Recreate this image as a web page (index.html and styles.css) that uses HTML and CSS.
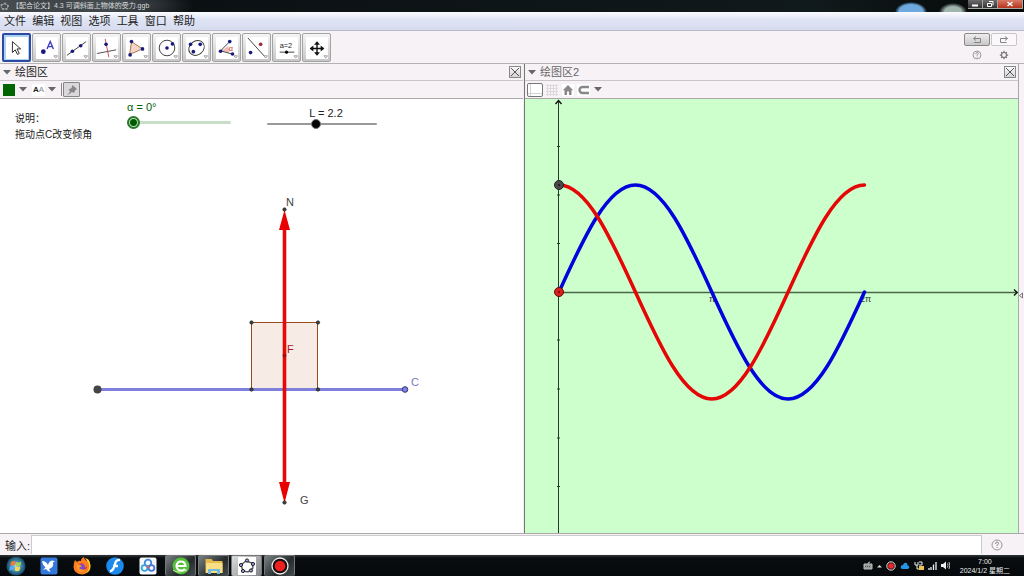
FILE: index.html
```html
<!DOCTYPE html>
<html lang="zh-CN">
<head>
<meta charset="utf-8">
<title>【配合论文】4.3 可调斜面上物体的受力.ggb</title>
<link rel="stylesheet" href="styles.css">
</head>
<body>
<div class="app">
  <header class="titlebar">
    <svg class="title-icon" width="9" height="9" viewBox="0 0 9 9"><ellipse cx="4.500" cy="4.500" rx="3.500" ry="2.600" fill="none" stroke="#8d8f93"/><g fill="#a5a7ac"><circle cx="1.500" cy="3" r="1"/><circle cx="5" cy="1.500" r="1"/><circle cx="8" cy="4" r="1"/><circle cx="3" cy="7" r="1"/><circle cx="6.500" cy="7" r="1"/></g></svg>
    <h1 class="title">【配合论文】4.3 可调斜面上物体的受力.ggb</h1>
    <div class="window-buttons">
      <button class="win-btn" aria-label="最小化"><svg width="8" height="8"><path d="M1 5.500h6" stroke="#fff" stroke-width="2"/></svg></button>
      <button class="win-btn" aria-label="还原"><svg width="8" height="8"><path d="M3 1.500h4v4M1.500 3.500h4v3h-4z" fill="none" stroke="#fff"/></svg></button>
      <button class="win-btn win-close" aria-label="关闭"><svg width="8" height="8"><path d="M1.500 2l5 4M6.500 2l-5 4" stroke="#fff" stroke-width="1.500"/></svg></button>
    </div>
  </header>

  <nav class="menubar">
    <button class="menu">文件</button><button class="menu">编辑</button><button class="menu">视图</button><button class="menu">选项</button><button class="menu">工具</button><button class="menu">窗口</button><button class="menu">帮助</button>
  </nav>

  <div class="toolbar">
    <div class="tools">
      <button class="tool tool-active" aria-label="移动"><svg viewBox="0 0 24 24"><path d="M7 5v12l3-3 2.500 5 2-1-2.500-5h4z" fill="#fff" stroke="#222"/></svg></button>
      <button class="tool" aria-label="点"><svg viewBox="0 0 24 24"><circle cx="8" cy="16" r="2.600" fill="#1a1a7e"/><path d="M12 13l3.500-8 3.500 8M13.300 10.500h4.400" fill="none" stroke="#3b3bc4" stroke-width="1.500"/><path class="corner" d="M19.500 20.500h4l-2 2.500z"/></svg></button>
      <button class="tool" aria-label="直线"><svg viewBox="0 0 24 24"><path d="M1 20L22 5" stroke="#333"/><circle cx="7" cy="15.500" r="2" fill="#1a1a7e"/><circle cx="16" cy="9.500" r="2" fill="#1a1a7e"/><path class="corner" d="M19.500 20.500h4l-2 2.500z"/></svg></button>
      <button class="tool" aria-label="垂线"><svg viewBox="0 0 24 24"><path d="M1 18L22 14" stroke="#444"/><path d="M10 2l4 20" stroke="#c44a4a"/><circle cx="11" cy="8" r="2" fill="#1a1a7e"/><path class="corner" d="M19.500 20.500h4l-2 2.500z"/></svg></button>
      <button class="tool" aria-label="多边形"><svg viewBox="0 0 24 24"><path d="M6 5l12 8-14 6z" fill="#f2d5c4" stroke="#a86d4b"/><g fill="#1a1a7e"><circle cx="6" cy="5" r="2"/><circle cx="18" cy="13" r="2"/><circle cx="4.500" cy="19.500" r="2"/></g><path class="corner" d="M19.500 20.500h4l-2 2.500z"/></svg></button>
      <button class="tool" aria-label="圆"><svg viewBox="0 0 24 24"><circle cx="12" cy="12" r="8.500" fill="none" stroke="#333"/><circle cx="12" cy="12" r="2" fill="#1a1a7e"/><circle cx="18" cy="7.500" r="2" fill="#1a1a7e"/><path class="corner" d="M19.500 20.500h4l-2 2.500z"/></svg></button>
      <button class="tool" aria-label="椭圆"><svg viewBox="0 0 24 24"><ellipse cx="11.500" cy="12" rx="9" ry="7.500" transform="rotate(-38 11.500 12)" fill="none" stroke="#333"/><g fill="#1a1a7e"><circle cx="5" cy="8" r="2"/><circle cx="15.500" cy="8" r="2"/><circle cx="8" cy="16" r="2"/></g><path class="corner" d="M19.500 20.500h4l-2 2.500z"/></svg></button>
      <button class="tool" aria-label="角度"><svg viewBox="0 0 24 24"><path d="M6 15l7-5a8 8 0 0 1 1.500 7z" fill="#f3b8b8"/><path d="M15 5L5 15l14 4" fill="none" stroke="#333"/><g fill="#1a1a7e"><circle cx="15" cy="5" r="2"/><circle cx="5" cy="15.500" r="2"/><circle cx="18" cy="18.500" r="2"/></g><text x="14" y="15" class="tool-alpha">α</text><path class="corner" d="M19.500 20.500h4l-2 2.500z"/></svg></button>
      <button class="tool" aria-label="对称"><svg viewBox="0 0 24 24"><path d="M2 1l19 21" stroke="#333"/><circle cx="16" cy="8" r="2" fill="#9c2b37"/><circle cx="5" cy="17" r="2" fill="#1a1a7e"/><path class="corner" d="M19.500 20.500h4l-2 2.500z"/></svg></button>
      <button class="tool" aria-label="滑动条"><svg viewBox="0 0 24 24"><text x="4" y="12" class="tool-text">a=2</text><path d="M4 16.500h16" stroke="#333"/><circle cx="11.500" cy="16.500" r="1.700"/><path class="corner" d="M19.500 20.500h4l-2 2.500z"/></svg></button>
      <button class="tool" aria-label="移动视图"><svg viewBox="0 0 24 24"><path d="M12 6v13M5 12.500h14" stroke="#111" stroke-width="1.500"/><path d="M12 4.500l-3.200 4h6.400zM12 20.500l-3.200-4h6.400zM4 12.500l4-3.200v6.400zM20 12.500l-4-3.200v6.400z" fill="#111"/><path class="corner" d="M19.500 20.500h4l-2 2.500z"/></svg></button>
    </div>
    <div class="actions">
      <button class="undo" aria-label="撤销"><svg width="10" height="8"><path d="M4 .5L1.500 2.500 4 4.500M1.500 2.500h7v4H2" fill="none" stroke="#858585"/></svg></button>
      <button class="redo" aria-label="重做"><svg width="10" height="8"><path d="M6 .5l2.500 2L6 4.500M8.500 2.500h-7v4h6" fill="none" stroke="#858585"/></svg></button>
      <button class="plain" aria-label="帮助"><svg width="10" height="10" viewBox="0 0 12 12"><circle cx="6" cy="6" r="4.700" fill="none" stroke="#888"/><path d="M4.500 5q0-2 1.600-2 1.500 0 1.400 1.400Q7.400 5.500 6 6.200V7M6 8v1" fill="none" stroke="#888"/></svg></button>
      <button class="plain" aria-label="设置"><svg width="10" height="10" viewBox="0 0 12 12"><circle cx="6" cy="6" r="3" fill="none" stroke="#777" stroke-width="1.400"/><path d="M6 1v2M6 9v2M1 6h2M9 6h2M2.500 2.500l1.300 1.300M8.200 8.200l1.300 1.300M9.500 2.500L8.200 3.800M3.800 8.200L2.500 9.500" stroke="#777" stroke-width="1.500"/></svg></button>
    </div>
  </div>

  <main class="views">
    <section class="view view-left">
      <div class="view-head">
        <svg class="arrow" width="8" height="5"><path d="M0 0h8L4 4.500z"/></svg>
        <h2 class="view-title">绘图区</h2>
        <button class="close" aria-label="关闭绘图区"><svg width="8" height="8"><path d="M0 0l8 8M8 0L0 8" stroke="#555"/></svg></button>
      </div>
      <div class="stylebar">
        <button class="plain swatch-btn" aria-label="颜色"><span class="swatch"></span><svg class="arrow" width="8" height="5"><path d="M0 0h8L4 4.500z"/></svg></button>
        <button class="plain text-btn" aria-label="文字大小"><span class="aa"><b>A</b><span class="a-light">A</span></span><svg class="arrow" width="8" height="5"><path d="M0 0h8L4 4.500z"/></svg></button>
        <span class="divider"></span>
        <button class="pin" aria-label="固定"><svg width="12" height="12"><path d="M6.500 1l4.500 4-1.500 1-1.500 3-2-1L1 11.500 4 7.500 2.500 5.500 5.500 4z" fill="#888"/></svg></button>
      </div>
      <div class="canvas">
        <svg class="drawing" role="img" aria-label="斜面上物体受力图">
          <rect x="251.500" y="223.500" width="66" height="67" fill="#f6ebe5" stroke="#994d1e"/>
          <path d="M98 290.500h307" stroke="#7f80dc" stroke-width="3"/>
          <path d="M284.500 127v262" stroke="#e60909" stroke-width="3.600"/>
          <path d="M284.500 111l5.500 20h-11zM284.500 404l5.500-21h-11z" fill="#e90000"/>
          <circle cx="97.500" cy="290.500" r="4" fill="#444"/>
          <circle cx="405" cy="290.500" r="2.800" fill="#7f80e8" stroke="#333670"/>
          <g fill="#444" stroke="#111" stroke-width=".6"><circle cx="284.500" cy="110.500" r="1.700"/><circle cx="251.500" cy="223.500" r="1.700"/><circle cx="318" cy="223.500" r="1.700"/><circle cx="251.500" cy="290.500" r="1.700"/><circle cx="318" cy="290.500" r="1.700"/><circle cx="284.500" cy="403.500" r="1.700"/></g>
          <circle cx="284.500" cy="256.500" r="1.500" fill="#b51212" stroke="#7c0000" stroke-width=".7"/>
          <text class="label" x="286" y="107">N</text>
          <text class="label label-force" x="287" y="254">F</text>
          <text class="label" x="300" y="405">G</text>
          <text class="label label-point" x="411" y="287">C</text>
        </svg>
        <p class="note">说明：<br>拖动点C改变倾角</p>
        <div class="slider slider-angle"><label class="angle-label" for="angle">α = 0°</label><input id="angle" type="range" min="0" max="90" value="0"></div>
        <div class="slider slider-length"><label for="length">L = 2.2</label><input id="length" type="range" min="0" max="5" step="0.1" value="2.2"></div>
      </div>
    </section>

    <section class="view view-right">
      <div class="view-head">
        <svg class="arrow" width="8" height="5"><path d="M0 0h8L4 4.500z"/></svg>
        <h2 class="view-title title-dim">绘图区2</h2>
        <button class="close" aria-label="关闭绘图区2"><svg width="8" height="8"><path d="M0 0l8 8M8 0L0 8" stroke="#555"/></svg></button>
      </div>
      <div class="stylebar">
        <button class="axes" aria-label="坐标轴"><svg width="14" height="12"><path d="M2.500 0v12M0 9.500h14" stroke="#d2d2d2"/></svg></button>
        <button class="plain" aria-label="网格"><svg width="12" height="12"><path d="M1.500 0v12M4.500 0v12M7.500 0v12M10.500 0v12M0 1.500h12M0 4.500h12M0 7.500h12M0 10.500h12" stroke="#dcdadd"/></svg></button>
        <button class="plain home" aria-label="标准视图"><svg width="12" height="12"><path d="M6 1L.8 6.300H2.500V11H5V7.500h2V11h2.500V6.300h1.700z" fill="#888"/></svg></button>
        <button class="plain snap" aria-label="点捕捉"><svg width="13" height="12"><path d="M12 3H5.500a3 3 0 0 0 0 6H12" fill="none" stroke="#888" stroke-width="2.400"/></svg><svg class="arrow" width="8" height="5"><path d="M0 0h8L4 4.500z"/></svg></button>
      </div>
      <div class="canvas canvas-green">
        <svg class="drawing" role="img" aria-label="正弦与余弦曲线">
          <path d="M33.500 2v440" stroke="#253b25"/>
          <path d="M30.500 5l3-3.500 3 3.500" fill="none" stroke="#111" stroke-width="1.400"/>
          <path d="M32 47.500h3M32 96h3M32 144.500h3M32 241h3M32 290h3M32 339h3M32 387.500h3" stroke="#253b25"/>
          <line x1="33" y1="193.500" x2="100%" y2="193.500" stroke="#4b654b" stroke-width="1.500"/>
          <svg x="100%" y="193" overflow="visible"><path d="M-4-2.500l3 3-3 3" fill="none" stroke="#111" stroke-width="1.400"/></svg>
          <text class="tick" x="184" y="203">π</text><text class="tick" x="335" y="203">2π</text>
          <path d="M34 193C58.900 138.200 82.700 86 110.400 86C138.100 86 161.900 138.200 186.800 193C211.700 247.800 235.500 300 263.100 300C290.800 300 314.600 247.800 339.500 193" fill="none" stroke="#0202dc" stroke-width="3.500" stroke-linecap="round"/>
          <path d="M34 86C61.700 86 85.500 138.200 110.400 193C135.300 247.800 159.100 300 186.800 300C214.400 300 238.200 247.800 263.100 193C288 138.200 311.800 86 339.500 86" fill="none" stroke="#e50606" stroke-width="3.500" stroke-linecap="round"/>
          <circle cx="34" cy="86" r="4.500" fill="#4a4a4a" stroke="#222"/><circle cx="34" cy="86" r="1.200" fill="#222"/>
          <circle cx="34" cy="193" r="4.500" fill="#df2020" stroke="#5d0909"/><circle cx="34" cy="193" r="1.200" fill="#850d0d"/>
        </svg>
      </div>
    </section>
    <button class="side-handle" aria-label="显示侧栏"><svg width="4" height="7"><path d="M3.500 1v5L.5 3.500z" fill="none" stroke="#777"/></svg></button>
  </main>

  <form class="inputbar">
    <label for="cmd">输入:</label>
    <input id="cmd" class="cmd" type="text">
    <button type="button" class="plain help" aria-label="输入帮助"><svg width="12" height="12"><circle cx="6" cy="6" r="5" fill="none" stroke="#999"/><path d="M4.500 5q0-2 1.600-2 1.500 0 1.400 1.400Q7.400 5.500 6 6.200V7M6 8v1" fill="none" stroke="#888"/></svg></button>
  </form>

  <footer class="taskbar">
    <div class="launchers">
      <button class="task" aria-label="开始"><svg viewBox="0 0 20 20"><defs><radialGradient id="orb"><stop offset="0" stop-color="#bfe6ed"/><stop offset=".5" stop-color="#438eb0"/><stop offset="1" stop-color="#174866"/></radialGradient></defs><circle cx="10" cy="10" r="9.500" fill="url(#orb)"/><path d="M5 6q2.500-1.500 4.500-.5l-.7 4q-2-1-4.500.3z" fill="#f27a38"/><path d="M10.300 6q2.500 1 5-.5l-.8 4q-2.500 1.300-4.800.4z" fill="#a2cf55"/><path d="M4 10.700q2.500-1.300 4.600-.3l-.8 4q-2-1-4.500.3z" fill="#56aef2"/><path d="M9.500 10.800q2.500 1 4.800-.4l-.8 4q-2.300 1.400-4.800.4z" fill="#f7d957"/></svg></button>
      <button class="task" aria-label="飞鸟"><svg viewBox="0 0 20 20"><rect x="1.500" y="1.500" width="17" height="17" rx="2" fill="#3478dc"/><path d="M3 5q4 0 6 4 1-4 4-4.500l3 .8-2 1.200q1 5-4 6.500l1.500 3q-3-.5-4.500-3-2 1-3 .2 2-.5 2.500-2Q4 10 3 5z" fill="#fff"/></svg></button>
      <button class="task" aria-label="Firefox"><svg viewBox="0 0 20 20"><path d="M3 4l2 2q2-2 4-1 0-3 3-4 0 2 2.500 4L16 3q3 4 2 9-2 6-8 6.500Q2 18 1.500 11 1.500 7 3 4z" fill="#ff7b22"/><path d="M13 2q2 3 3.500 5 2 7-3 10 5-1 5-7-.5-5-3-7z" fill="#ffd12f"/><path d="M4 8q3 1 6-1l2 2-3 2q3 3 6-1-1 6-6 5.500Q4 14 4 8z" fill="#c52b45"/><circle cx="10" cy="11" r="3" fill="#7c4acb"/><path d="M4 8q4 0 6 2l-3 2q3 3 7 1-2 4-6 3-4-2-4-8z" fill="#ff9825"/></svg></button>
      <button class="task" aria-label="Flash"><svg viewBox="0 0 20 20"><circle cx="10" cy="10" r="8.800" fill="#1d8bee"/><path d="M15 4q-4-.5-5 4-1 6-5 7.500M8 10h5" fill="none" stroke="#fff" stroke-width="2.300"/></svg></button>
      <button class="task" aria-label="网盘"><svg viewBox="0 0 20 20"><rect x="1.500" y="1.500" width="17" height="17" rx="2" fill="#f6f8fb"/><circle cx="10" cy="7" r="3.300" fill="none" stroke="#3b8be1" stroke-width="1.800"/><circle cx="6.500" cy="12" r="2.900" fill="none" stroke="#2ea7d9" stroke-width="1.800"/><circle cx="13.500" cy="12" r="2.900" fill="none" stroke="#4676d7" stroke-width="1.800"/><path d="M9 10l2 2" stroke="#eb5961" stroke-width="2"/></svg></button>
      <button class="task task-open" aria-label="浏览器"><svg viewBox="0 0 20 20"><circle cx="10" cy="10" r="8.500" fill="#54bf38"/><path d="M6 10h8.500Q14 5.500 10 5.500T5.500 10Q6 14.500 10 14.500q3 0 4-1.800" fill="none" stroke="#fff" stroke-width="2.200"/><path d="M2 14Q6 18 16 14" fill="none" stroke="#d7f1b4"/></svg></button>
      <button class="task task-open" aria-label="资源管理器"><svg viewBox="0 0 20 20"><path d="M1.500 3h6l1.500 2h9.500v12h-17z" fill="#e5bc4b"/><path d="M2 7h16.500v10H2z" fill="#f8df85"/><path d="M4 18v-5h12v5h-3v-3H7v3z" fill="#75b8dd"/></svg></button>
      <button class="task task-open task-current" aria-label="GeoGebra"><svg viewBox="0 0 20 20"><rect x="1" y="1" width="18" height="18" fill="#fff"/><path d="M4 9l5-4 6 2 1 5-5 4-5-1z" fill="none" stroke="#555" stroke-width="1.400"/><g fill="#9999eb" stroke="#222"><circle cx="4" cy="9" r="1.600"/><circle cx="10" cy="4.500" r="1.600"/><circle cx="16" cy="8" r="1.600"/><circle cx="14" cy="14.500" r="1.600"/><circle cx="6" cy="15" r="1.600"/></g></svg></button>
      <button class="task task-open" aria-label="录屏"><svg viewBox="0 0 20 20"><circle cx="10" cy="10" r="8" fill="#160b0b" stroke="#eee" stroke-width="1.300"/><circle cx="10" cy="10" r="5.300" fill="#ed2020"/></svg></button>
    </div>
    <div class="tray">
      <svg width="10" height="9"><path d="M1 3h8v5H1zM5 3q0-2 2-2" fill="#999" stroke="#bbb"/><path d="M2 5.500h6" stroke="#555" stroke-dasharray="1 1"/></svg>
      <svg width="5" height="4"><path d="M0 3.500h5L2.500 1z" fill="#ddd"/></svg>
      <svg width="10" height="10"><circle cx="5" cy="5" r="4.200" fill="#311" stroke="#ddd"/><circle cx="5" cy="5" r="2.800" fill="#ed2525"/></svg>
      <svg width="10" height="9"><path d="M2 8q-2-1-1-3 1-1.500 2-1 1-3 3.500-2Q8 3 7.500 4.500 10 5 9 7L8 8z" fill="#2495e8"/></svg>
      <svg width="10" height="10"><path d="M1 1v3h3V1M3 4v4h3M5 1h3v3H5" fill="none" stroke="#eee"/><path d="M5 5h5v4H5z" fill="#edc44b"/></svg>
      <svg width="9" height="9"><path d="M1 9V7M3 9V6M5.500 9V3.500M8 9V1" stroke="#eee" stroke-width="1.300"/></svg>
      <svg width="9" height="9"><path d="M0 3h2l3-2.500v8L2 6H0z" fill="#eee"/><path d="M6.500 2.500q1 2 0 4M8 1q1.500 3.500 0 7" fill="none" stroke="#bbb"/></svg>
      <time class="clock" datetime="2024-01-02T07:00">7:00<br>2024/1/2 星期二</time>
    </div>
  </footer>
</div>
</body>
</html>
```
FILE: styles.css
```css
* { box-sizing: border-box; }
body { margin: 0; font-family: "Liberation Sans", "Noto Sans CJK SC", sans-serif; font-size: 11px; color: #222; }
button { font: inherit; color: inherit; padding: 0; border: 0; background: none; }
h1, h2, p { margin: 0; font-weight: 400; }
svg { display: block; flex: none; }
.app { display: flex; flex-direction: column; height: 100vh; background: #f6f2f6; overflow: hidden; }

.titlebar { display: flex; align-items: center; height: 12px; flex: none; gap: 3px; background: radial-gradient(ellipse 16px 10px at 911px 12px, #6da9dc 0 75%, transparent), radial-gradient(ellipse 14px 9px at 953px 12px, #9fb4ac 0 60%, transparent), radial-gradient(ellipse 90px 20px at 105px 5px, #4c5458, transparent), linear-gradient(90deg, #4a4f52, #0b1013 180px, #10191b 820px, #050707 100%); }
.title { flex: 1; font-size: 7px; line-height: 12px; color: #d9dadc; white-space: nowrap; }
.window-buttons { display: flex; align-self: flex-start; padding-right: 1px; }
.win-btn { display: grid; place-items: center; width: 15px; height: 9px; border: 1px solid #a5a5a5; border-width: 0 1px 1px 0; background: linear-gradient(#6c6c6c, #333); }
.win-close { width: 25px; background: linear-gradient(#d87966, #b6321c); }

.menubar { display: flex; flex: none; justify-content: space-between; align-items: center; align-self: stretch; height: 19px; padding: 0 829px 0 4px; background: linear-gradient(#fcfcff, #dfe4f4 40%, #d6dcef); border-bottom: 1px solid #b9bac6; }
.menu { line-height: 16px; white-space: nowrap; }

.toolbar { display: flex; justify-content: space-between; flex: none; height: 33px; padding: 2px 7px 2px 2px; border-bottom: 1px solid #b5b3b6; }
.tools { display: flex; gap: 1px; }
.tool { display: grid; place-items: center; width: 29px; height: 29px; border: 1px solid #a3a3a3; border-radius: 2px; background: linear-gradient(#f5f5f5, #c6c6c6); }
.tool svg { width: 22px; height: 22px; background: #fff; }
.tool-active { border: 2px solid #2d49a2; background: #a9d3f2; }
.corner { fill: #fff; stroke: #999; stroke-width: 1px; }
.tool-alpha { font-size: 8px; fill: #c33; }
.tool-text { font-size: 8px; fill: #222; }
.actions { display: grid; grid-template-columns: 26px 26px; grid-template-rows: 13px 15px; gap: 1px; }
.actions button { display: grid; place-items: center; }
.actions .undo { border: 1px solid #888; border-radius: 2px; background: linear-gradient(#eee, #c8c8c8); }
.actions .redo { border: 1px solid #c9c7ca; border-radius: 2px; background: #faf8fa; }

.views { display: flex; flex: 1; min-height: 0; }
.view { display: flex; flex-direction: column; min-width: 0; }
.view-left { flex: 524; border-right: 1px solid #777; }
.view-right { flex: 494; border-right: 1px solid #a9a9a9; border-left: 1px solid #777; }
.view-left { border-right-color: #eee; }
.view-head { display: flex; align-items: center; height: 17px; flex: none; gap: 4px; padding: 0 2px 0 3px; border-bottom: 1px solid #c8c6c9; }
.view-title { flex: 1; line-height: 16px; font-size: 11px; }
.title-dim { color: #666; }
.arrow { fill: #666; }
.close { display: grid; place-items: center; width: 12px; height: 12px; border: 1px solid #888; background: linear-gradient(#fafafa, #d2d2d2); }
.stylebar { display: flex; align-items: center; height: 18px; flex: none; gap: 5px; padding: 0 2px; border-bottom: 1px solid #aaa8ab; }
.plain { display: flex; align-items: center; gap: 4px; }
.swatch-btn { padding-left: 1px; }
.swatch { width: 12px; height: 12px; background: #006400; }
.text-btn { gap: 3px; }
.aa { display: flex; justify-content: center; width: 13px; font-size: 8px; line-height: 12px; background: #fff; }
.a-light { color: #888; }
.divider { width: 1px; height: 13px; background: #888; }
.pin { display: grid; place-items: center; width: 17px; height: 15px; margin-left: -4px; border: 1px solid #858585; border-radius: 1px; background: #dad8da; }
.axes { display: grid; place-items: center; width: 16px; height: 14px; border: 1px solid #777; border-radius: 2px; background: #fff; }
.view-right .stylebar { gap: 3px; }
.home { background: #fff; margin-left: 1px; }
.snap { background: linear-gradient(#fff, #fff) 0 0 / 13px 100% no-repeat; }
.canvas { position: relative; flex: 1; min-height: 0; background: #fff; overflow: hidden; }
.canvas-green { background: #ccffcc; }
.drawing { width: 100%; height: 100%; }
.label { font-size: 11px; fill: #444; }
.label-force { fill: #a51b1b; }
.label-point { fill: #7778c8; }
.tick { font-size: 9px; fill: #333; }
.note { position: absolute; left: 15px; top: 12px; line-height: 16px; font-size: 10px; }
.slider { position: absolute; display: flex; flex-direction: column; top: 0; align-items: center; line-height: 13px; }
.slider input { appearance: none; width: 100%; margin: 0; background: transparent; }
.slider-angle { left: 127px; top: 2px; width: 104px; align-items: flex-start; color: #00600b; }
.slider-length { left: 267px; top: 8px; width: 110px; }
.slider-length label { padding-left: 8px; }
.slider input::-webkit-slider-runnable-track { height: 3px; border-radius: 2px; background: #c9dec9; }
.slider-length input::-webkit-slider-runnable-track { height: 2px; background: #999; }
.slider input::-webkit-slider-thumb { appearance: none; width: 13px; height: 13px; margin-top: -5px; border: 2px solid #277827; border-radius: 50%; background: radial-gradient(#005b00 0 3px, #bcdcbc 4px); }
.slider input { height: 16px; }
.slider-length input { height: 8px; }
.slider-length input::-webkit-slider-thumb { width: 10px; height: 10px; margin-top: -4px; border: 1px solid #777; background: #050505; }
.side-handle { width: 5px; padding-bottom: 7px; overflow: hidden; }

.inputbar { display: flex; flex: none; align-items: center; height: 22px; padding-left: 5px; border-top: 1px solid #aaa8ab; }
.cmd { flex: 1; min-width: 0; height: 19px; margin-left: 1px; border: 1px solid #ccc; border-width: 1px 1px 0; background: #fff; }
.help { padding: 0 21px 0 9px; }

.taskbar { display: flex; justify-content: space-between; height: 21px; flex: none; background: linear-gradient(#32383a, #090d10 3px, #05090c); }
.launchers { display: flex; gap: 2px; }
.task { display: grid; place-items: center; width: 31px; height: 21px; }
.task svg { width: 20px; height: 20px; }
.task-open { border: 1px solid #777; border-bottom: 0; border-radius: 2px; background: linear-gradient(135deg, #788183, #252b2d 60%, #454d4e); }
.task-current { background: linear-gradient(135deg, #ddd, #7e8283); }
.tray { display: flex; align-items: center; gap: 4px; padding-right: 14px; color: #eee; }
.clock { margin-left: 6px; font-size: 7px; line-height: 9px; text-align: center; white-space: nowrap; }
```
